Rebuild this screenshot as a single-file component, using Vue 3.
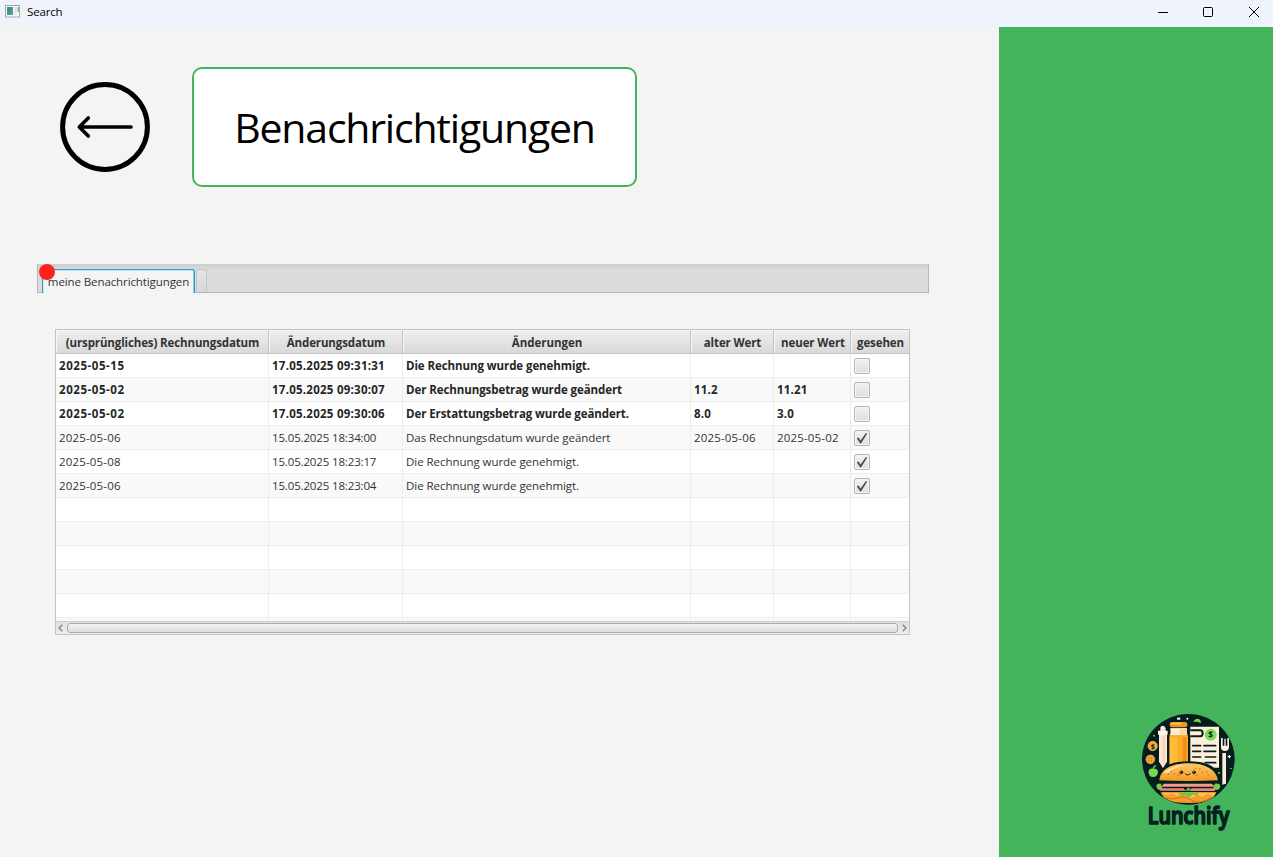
<script setup>
const columns = [
  { key: 'invoice', label: '(ursprüngliches) Rechnungsdatum', cls: 'h-invoice' },
  { key: 'changed', label: 'Änderungsdatum', cls: 'h-changed' },
  { key: 'text', label: 'Änderungen', cls: 'h-text' },
  { key: 'before', label: 'alter Wert', cls: 'h-before' },
  { key: 'after', label: 'neuer Wert', cls: 'h-after' },
  { key: 'seen', label: 'gesehen', cls: 'h-seen' },
]
const rows = [
  { invoice: '2025-05-15', changed: '17.05.2025 09:31:31', text: 'Die Rechnung wurde genehmigt.', before: '', after: '', seen: false },
  { invoice: '2025-05-02', changed: '17.05.2025 09:30:07', text: 'Der Rechnungsbetrag wurde geändert', before: '11.2', after: '11.21', seen: false },
  { invoice: '2025-05-02', changed: '17.05.2025 09:30:06', text: 'Der Erstattungsbetrag wurde geändert.', before: '8.0', after: '3.0', seen: false },
  { invoice: '2025-05-06', changed: '15.05.2025 18:34:00', text: 'Das Rechnungsdatum wurde geändert', before: '2025-05-06', after: '2025-05-02', seen: true },
  { invoice: '2025-05-08', changed: '15.05.2025 18:23:17', text: 'Die Rechnung wurde genehmigt.', before: '', after: '', seen: true },
  { invoice: '2025-05-06', changed: '15.05.2025 18:23:04', text: 'Die Rechnung wurde genehmigt.', before: '', after: '', seen: true },
]
const emptyRows = 6
const textKeys = ['invoice', 'changed', 'text', 'before', 'after']
</script>

<template>
  <div class="window">
    <header class="titlebar">
      <svg class="app-icon" width="15" height="13" viewBox="0 0 15 13">
        <defs>
          <linearGradient id="appg" x1="0" y1="0" x2="1" y2="1">
            <stop offset="0" stop-color="#3f7fa6" /><stop offset="1" stop-color="#52b077" />
          </linearGradient>
        </defs>
        <rect x=".5" y=".5" width="14" height="11.5" fill="#fbfbfb" stroke="#a3a7a8" />
        <rect x="2" y="2" width="6" height="8" fill="url(#appg)" />
        <rect x="9" y="2" width="3" height="8" fill="#e6e8e8" />
        <rect x="12.6" y="2" width="1.2" height="5" fill="#58b08a" />
      </svg>
      <span class="app-name">Search</span>
      <div class="controls">
        <svg width="12" height="12" viewBox="0 0 12 12"><path d="M1 6.5H11" stroke="#000" fill="none" /></svg>
        <svg width="12" height="12" viewBox="0 0 12 12"><rect x="1.5" y="1.5" width="9" height="9" rx="1" stroke="#000" fill="none" /></svg>
        <svg width="12" height="12" viewBox="0 0 12 12"><path d="M1 1L11 11M11 1L1 11" stroke="#000" fill="none" /></svg>
      </div>
    </header>

    <div class="body">
      <main class="content">
        <div class="head">
          <svg class="back" width="90" height="90" viewBox="0 0 90 90">
            <circle cx="45" cy="45" r="42.4" fill="none" stroke="#000" stroke-width="5" />
            <path d="M71 45H19.5M28.3 36L19.3 45L28.3 54" fill="none" stroke="#000" stroke-width="3.6" stroke-linecap="round" stroke-linejoin="round" />
          </svg>
          <h1 class="title"><span>Benachrichtigungen</span></h1>
        </div>

        <div class="tabs">
          <div class="tab"><span>meine Benachrichtigungen</span></div>
          <div class="tab-stub"></div>
          <i class="dot"></i>
        </div>

        <div class="table">
          <div class="row header">
            <div v-for="c in columns" :key="c.key" class="cell"><span :class="c.cls">{{ c.label }}</span></div>
          </div>
          <div class="rows">
            <div v-for="(r, i) in rows" :key="i" class="row" :class="{ unseen: !r.seen }">
              <div v-for="k in textKeys" :key="k" class="cell" :class="'c-' + k"><span>{{ r[k] }}</span></div>
              <div class="cell">
                <div class="check">
                  <svg v-if="r.seen" width="14" height="14" viewBox="0 0 14 14"><path d="M1.9 7.3L3.6 6.4L5.6 9.6L10.9 2L12.2 2.5L6.2 12.2H5Z" fill="#4c4c4c" /></svg>
                </div>
              </div>
            </div>
            <div v-for="n in emptyRows" :key="'e' + n" class="row">
              <div v-for="c in columns" :key="c.key" class="cell"></div>
            </div>
          </div>
          <div class="scroll">
            <svg width="11" height="12" viewBox="0 0 11 12"><path d="M6.3 2.7L3 6L6.3 9.3" stroke="#858585" stroke-width="1.4" fill="none" /></svg>
            <div class="thumb"></div>
            <svg width="11" height="12" viewBox="0 0 11 12"><path d="M4.7 2.7L8 6L4.7 9.3" stroke="#858585" stroke-width="1.4" fill="none" /></svg>
          </div>
        </div>
      </main>

      <aside class="side">
        <svg class="logo" width="115" height="136" viewBox="0 0 345 408">
          <defs>
            <linearGradient id="bun" x1="0" y1="0" x2="0" y2="1">
              <stop offset="0" stop-color="#ffc766" /><stop offset="1" stop-color="#f39b22" />
            </linearGradient>
            <clipPath id="disc"><ellipse cx="175" cy="163" rx="138" ry="135" /></clipPath>
          </defs>
          <ellipse cx="175" cy="163" rx="139" ry="136" fill="#041d1e" />
          <g clip-path="url(#disc)">
            <!-- receipt -->
            <path d="M181 65H267V188H181Z" fill="#ffeed9" />
            <path d="M181 76H211Q218 76 218 85T211 94H181" fill="#ffeed9" stroke="#041d1e" stroke-width="6" />
            <circle cx="242" cy="89" r="18" fill="#7bdc59" />
            <path d="M188 122H212M222 122H257M188 139H212M222 139H257M188 156H212M226 156H257M226 173H257" stroke="#041d1e" stroke-width="5" stroke-linecap="round" />
            <!-- bottle -->
            <path d="M120 70H170V80L174 94V184H118V94L122 80Z" fill="#ffab26" />
            <path d="M122 70H170V90H122Z" fill="#fff0d7" />
            <path d="M148 70H170V90H148Z" fill="#ffd9a6" />
            <path d="M120 98H142V184H120Z" fill="#ffbb3c" />
            <path d="M158 98H170V184H158Z" fill="#f0901c" />
            <rect x="119" y="51" width="53" height="16" rx="7" fill="#f49325" />
            <rect x="124" y="53" width="30" height="5" rx="2" fill="#ffc55b" />
            <!-- pencil -->
            <path d="M91 70Q91 62 98 62T107 70V78H111V170L99 190L87 170V78H91Z" fill="#ffe5cf" />
            <path d="M84 77H113V89H84Z" fill="#fff7ea" />
            <path d="M104 92V168L100 183V92Z" fill="#efc8ab" />
            <!-- fork -->
            <path d="M273 99H278V122H283V101H287V122H292V99H297V126Q297 138 285 138T273 126Z" fill="#fff0df" />
            <path d="M277 144H288V236L277 239Z" fill="#ffe9d6" />
            <!-- ornaments -->
            <path d="M191 51Q195 39 206 42Q214 45 212 55L203 50Z" fill="#79cf4e" />
            <rect x="141" y="38" width="10" height="6" fill="#fff0dc" />
            <circle cx="172" cy="41" r="3" fill="#fff" /><circle cx="72" cy="92" r="3" fill="#6cc854" />
            <path d="M298 150V160M293 155H303" stroke="#fff" stroke-width="3" />
            <circle cx="267" cy="204" r="3" fill="#84d956" /><circle cx="303" cy="190" r="2" fill="#fff" />
            <circle cx="68" cy="123" r="14" fill="#f4a435" stroke="#ffc967" stroke-width="2" />
            <circle cx="61" cy="163" r="13" fill="#f2a02c" stroke="#ffc25a" stroke-width="2" />
            <path d="M56 159H58M64 159H66M56 167H58M64 167H66" stroke="#9c6114" stroke-width="3" />
            <path d="M70 192C59 187 53 198 57 208C61 218 67 216 70 215C76 218 83 211 84 202C85 192 76 189 70 192Z" fill="#7ad64b" />
            <path d="M70 192Q70 184 78 182" stroke="#7ad64b" stroke-width="4" fill="none" />
            <!-- burger -->
            <path d="M84 234Q77 170 175 169T268 234Z" fill="#041d1e" />
            <path d="M88 226C91 193 124 175 175 175S258 193 264 226Q175 230 88 226Z" fill="url(#bun)" />
            <path d="M100 204Q123 181 166 180Q132 188 115 203Z" fill="#ffe1a3" />
            <path d="M115 208h1M124 199h1M132 207h1M209 192h1M217 202h1M230 201h1M234 210h1M196 190h1" stroke="#a25c18" stroke-width="3" stroke-linecap="round" />
            <circle cx="154" cy="202" r="5.5" fill="#182323" /><circle cx="192" cy="202" r="5.5" fill="#182323" />
            <circle cx="152" cy="200" r="1.5" fill="#fff" /><circle cx="190" cy="200" r="1.5" fill="#fff" />
            <path d="M165 206Q173 215 181 206" fill="none" stroke="#182323" stroke-width="3" />
            <circle cx="145" cy="211" r="4" fill="#f58438" /><circle cx="201" cy="211" r="4" fill="#f58438" />
            <path d="M79 243Q80 234 93 236L98 253Q82 260 79 243ZM271 243Q270 234 254 236L249 253Q269 260 271 243Z" fill="#76c944" />
            <path d="M101 236H245L256 245H95Z" fill="#f49b87" />
            <path d="M94 250H160L168 257H91Q88 251 94 250ZM184 250H252Q259 252 254 258H181Z" fill="#ee8277" />
            <path d="M165 257L175 247L186 257Z" fill="#6fbd40" />
            <path d="M92 263H258L249 281Q226 294 175 294Q124 294 104 281Z" fill="#f89c2c" />
            <path d="M91 262H260L247 273L233 266L216 275L202 267L190 275L176 281L165 273L151 267L143 273L129 266L111 270Z" fill="#ffc34f" />
            <path d="M143 263H207L199 271L190 268L176 279L164 270L154 272Z" fill="#70c443" />
            <path d="M106 279Q124 285 145 278T185 286T246 277" stroke="#d96a1a" stroke-width="3" fill="none" />
          </g>
          <text x="242" y="98" class="coin" font-size="25" text-anchor="middle">$</text>
          <text x="68" y="131" class="coin" font-size="21" text-anchor="middle">$</text>
          <text x="53" y="356" class="brand" textLength="245" lengthAdjust="spacingAndGlyphs">Lunchify</text>
        </svg>
      </aside>
    </div>
  </div>
</template>

<style>
html, body { margin: 0; overflow: hidden; }
</style>

<style scoped>
.window { width: 1273px; height: 857px; display: flex; flex-direction: column; background: #f4f4f4; font-family: "Open Sans", "Noto Sans", sans-serif; font-size: 11.5px; color: #333; }
.titlebar { height: 27px; flex: none; box-sizing: border-box; display: flex; align-items: center; background: #eff3fb; padding: 0 13px 4px 5px; color: #000; }
.app-icon { margin-right: 7px; }
.app-name { letter-spacing: -0.15px; line-height: 16px; margin-top: 1px; }
.controls { margin-left: auto; display: flex; gap: 33px; }
.controls svg:last-child { margin-left: 1px; }
.body { flex: 1; display: flex; min-height: 0; }
.content { flex: 1; min-width: 0; padding: 40px 0 0 37px; }
.head { display: flex; align-items: center; gap: 42px; padding-left: 23px; }
.title { margin: 0; box-sizing: border-box; width: 445px; height: 120px; border: 2px solid #44b45c; border-radius: 10px; background: #fff; display: flex; align-items: center; justify-content: center; font-weight: 400; font-size: 41px; line-height: 56px; color: #000; white-space: nowrap; letter-spacing: -1.2px; }
.tabs { position: relative; box-sizing: border-box; width: 892px; height: 29px; margin-top: 77px; padding: 4px 0 0 4px; display: flex; background: linear-gradient(#d0d0d0, #dcdcdc 5px); border: 1px solid #b5b5b5; border-top-color: #cfcfcf; }
.tab { box-sizing: border-box; width: 153px; height: 24px; border: solid #1e9ed0; border-width: 1px 1px 0; border-radius: 3px 3px 0 0; background: #f4f4f4; box-shadow: inset 1px 1px #cfe6f0, inset -1px 0 #8cc9e2; display: flex; align-items: center; justify-content: center; white-space: nowrap; line-height: 18px; padding-top: 1px; letter-spacing: -0.1px; }
.tab-stub { box-sizing: border-box; width: 11px; height: 23px; margin-left: 1px; border: 1px solid #c5c5c5; border-bottom: 0; border-radius: 3px 3px 0 0; background: linear-gradient(#e4e4e4, #d9d9d9); }
.dot { position: absolute; left: 1px; top: -1px; width: 16px; height: 16px; border-radius: 50%; background: #ff2020; }
.table { box-sizing: border-box; width: 855px; height: 306px; margin: 36px 0 0 18px; border: 1px solid #c3c3c3; background: #fff; display: flex; flex-direction: column; }
.row { flex: none; display: grid; grid-template-columns: 213px 134px 288px 83px 77px 58px; height: 24px; box-sizing: border-box; border-bottom: 1px solid #ededed; }
.rows { flex: 1; min-height: 0; overflow: hidden; }
.rows .row:nth-child(even) { background: #f9f9f9; }
.cell { box-sizing: border-box; border-right: 1px solid #ededed; padding-left: 3px; display: flex; align-items: center; white-space: nowrap; min-width: 0; line-height: 16px; }
.cell:last-child { border-right: 0; }
.header { border-bottom-color: #c3c3c3; font-weight: 700; letter-spacing: -0.12px; }
.header .cell { justify-content: center; padding: 2px 0 0 1px; border-right-color: #c3c3c3; background: linear-gradient(#efefef, #d9d9d9); box-shadow: inset 1px 1px #f6f6f6; }
.header .h-text { letter-spacing: -0.02px; }
.header .h-after { padding-left: 1px; }
.rows .row { letter-spacing: -0.05px; }
.rows .row .c-invoice, .rows .row .c-before, .rows .row .c-after { letter-spacing: 0.17px; }
.rows .row .c-changed { letter-spacing: -0.15px; }
.rows .row.unseen { font-weight: 700; letter-spacing: -0.08px; color: #262626; }
.rows .row.unseen .c-invoice { letter-spacing: 0.55px; }
.rows .row.unseen .c-changed { letter-spacing: 0.25px; }
.check { box-sizing: border-box; width: 16px; height: 16px; border: 1px solid #b5b5b5; border-radius: 2px; background: linear-gradient(#f3f3f3, #dedede); box-shadow: inset 0 0 0 1px #f4f4f4; display: flex; align-items: center; justify-content: center; margin-top: 1px; }
.check svg { flex: none; }
.scroll { flex: none; height: 13px; box-sizing: border-box; border-top: 1px solid #cfcfcf; background: linear-gradient(#e0e0e0, #efefef); display: flex; align-items: center; }
.thumb { flex: 1; height: 10px; box-sizing: border-box; border: 1px solid #ababab; border-radius: 3px; background: linear-gradient(#f3f3f3, #dedede); }
.side { width: 274px; flex: none; box-sizing: border-box; background: #44b45c; display: flex; justify-content: flex-end; align-items: flex-end; padding: 0 28px 16px 0; }
.logo { display: block; overflow: visible; }
.brand { font-family: "Open Sans", sans-serif; font-weight: 600; font-size: 68px; fill: #05211f; stroke: #05211f; stroke-width: 5px; stroke-linejoin: round; }
.coin { font-family: "Open Sans", sans-serif; font-weight: 700; fill: #06201e; }
</style>
